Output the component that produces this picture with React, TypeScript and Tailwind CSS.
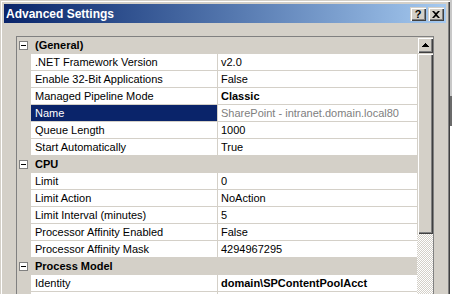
type Prop = { name: string; value: string; bold?: boolean; selected?: boolean; dim?: boolean }
type Category = { title: string; props: Prop[] }

const categories: Category[] = [
  {
    title: '(General)',
    props: [
      { name: '.NET Framework Version', value: 'v2.0' },
      { name: 'Enable 32-Bit Applications', value: 'False' },
      { name: 'Managed Pipeline Mode', value: 'Classic', bold: true },
      { name: 'Name', value: 'SharePoint - intranet.domain.local80', selected: true, dim: true },
      { name: 'Queue Length', value: '1000' },
      { name: 'Start Automatically', value: 'True' },
    ],
  },
  {
    title: 'CPU',
    props: [
      { name: 'Limit', value: '0' },
      { name: 'Limit Action', value: 'NoAction' },
      { name: 'Limit Interval (minutes)', value: '5' },
      { name: 'Processor Affinity Enabled', value: 'False' },
      { name: 'Processor Affinity Mask', value: '4294967295' },
    ],
  },
  {
    title: 'Process Model',
    props: [
      { name: 'Identity', value: 'domain\\SPContentPoolAcct', bold: true },
      { name: '', value: '' },
    ],
  },
]

// classic raised 3D edge
const raised =
  'bg-[#d4d0c8] shadow-[inset_1px_1px_#d4d0c8,inset_2px_2px_#ffffff,inset_-1px_-1px_#404040,inset_-2px_-2px_#808080]'

function MinusBox() {
  return (
    <div className="w-[9px] h-[9px] border border-[#808080] bg-white flex items-center justify-center">
      <div className="w-[5px] h-px bg-black" />
    </div>
  )
}

function CategoryRow({ title }: { title: string }) {
  return (
    <div className="flex h-[17px] bg-[#d4d0c8] items-center">
      <div className="w-[14px] pl-[2px] flex items-center">
        <MinusBox />
      </div>
      <span className="pl-[4px] font-bold text-black">{title}</span>
    </div>
  )
}

function PropRow({ p }: { p: Prop }) {
  return (
    <div className="flex h-[17px]">
      <div className="w-[14px] bg-[#d4d0c8]" />
      <div
        className={
          'w-[187px] border-r border-b border-[#d4d0c8] pl-[4px] flex items-center whitespace-nowrap overflow-hidden ' +
          (p.selected ? 'bg-[#0a246a] text-white' : 'bg-white text-black')
        }
      >
        {p.name}
      </div>
      <div
        className={
          'flex-1 bg-white border-b border-[#d4d0c8] pl-[3px] flex items-center whitespace-nowrap overflow-hidden ' +
          (p.bold ? 'font-bold ' : '') +
          (p.dim ? 'text-[#808080]' : 'text-black')
        }
      >
        {p.value}
      </div>
    </div>
  )
}

function ScrollBar() {
  return (
    <div className="w-[16px] flex flex-col">
      <div className={raised + ' h-[16px] flex items-center justify-center'}>
        <svg width="7" height="4" viewBox="0 0 7 4">
          <path d="M3 0h1v1h1v1h1v1h1v1H0V3h1V2h1V1h1z" fill="#000" />
        </svg>
      </div>
      <div className={raised + ' h-[181px]'} />
      <div className="flex-1 bg-[repeating-conic-gradient(#ffffff_0%_25%,#d4d0c8_0%_50%)] bg-[length:2px_2px]" />
    </div>
  )
}

function CaptionButton({ children }: { children: React.ReactNode }) {
  return <div className={raised + ' w-[16px] h-[14px] flex items-center justify-center'}>{children}</div>
}

export default function App() {
  return (
    <div className="w-[452px] h-[294px] overflow-hidden flex bg-[#d4d0c8] font-['Liberation_Sans',Arial,sans-serif] text-[11px] leading-none">
      {/* dialog window */}
      <div className="w-[450px] h-[300px] p-[4px] flex flex-col shadow-[inset_1px_1px_#d4d0c8,inset_2px_2px_#ffffff,inset_-1px_-1px_#404040,inset_-2px_-2px_#808080]">
        {/* title bar */}
        <div className="h-[19px] shrink-0 flex bg-gradient-to-r from-[#0a246a] to-[#a6caf0]">
          <span className="pl-[2px] pt-[1px] self-center font-bold text-white text-[12px]">Advanced Settings</span>
          <div className="ml-auto mr-[2px] mt-[3px] flex gap-[2px] self-start">
            <CaptionButton>
              <span className="font-bold text-black text-[11px] leading-none">?</span>
            </CaptionButton>
            <CaptionButton>
              <svg width="8" height="7" viewBox="0 0 8 7">
                <path d="M0 0h2l2 2 2-2h2L5 3.5 8 7H6L4 5 2 7H0l3-3.5z" fill="#000" />
              </svg>
            </CaptionButton>
          </div>
        </div>

        {/* body */}
        <div className="flex-1 pt-[13px] px-[12px]">
          <div className="w-[418px] h-[300px] border border-[#808080] flex">
            <div className="w-[400px] flex flex-col">
              {categories.map((c) => (
                <div key={c.title}>
                  <CategoryRow title={c.title} />
                  {c.props.map((p, i) => (
                    <PropRow key={i} p={p} />
                  ))}
                </div>
              ))}
            </div>
            <ScrollBar />
          </div>
        </div>
      </div>
      {/* window behind */}
      <div className="flex-1 flex flex-col">
        <div className="h-[96px] bg-[#c8c8c8]" />
        <div className="h-[30px] bg-[#6b6b6b]" />
        <div className="flex-1 bg-white" />
      </div>
    </div>
  )
}
